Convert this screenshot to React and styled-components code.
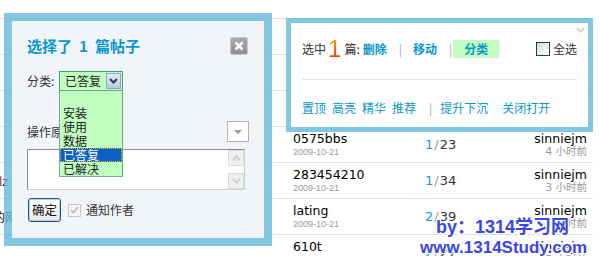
import React from "react";
import styled, { createGlobalStyle } from "styled-components";

const CJK = `"Noto Sans CJK SC", "Noto Sans", sans-serif`;
const LATIN = `"DejaVu Sans", "Noto Sans CJK SC", sans-serif`;

const GlobalStyle = createGlobalStyle`
  html, body { margin: 0; padding: 0; background: #fff; }
  body { font-family: ${CJK}; font-size: 12px; color: #333; }
  * { box-sizing: border-box; }
`;

const Page = styled.div`
  position: relative;
  width: 600px;
  height: 256px;
  overflow: hidden;
  background: #fff;
`;

/* ---------- background topic table ---------- */
const Table = styled.div`
  width: 593px;
`;

const Row = styled.div`
  display: grid;
  grid-template-columns: 17px 276px 132px 90px 1fr;
  height: ${(p) => p.$h ?? 36}px;
  border-bottom: 1px solid #e2e2e2;
`;

const Fragment = styled.div`
  grid-column: 1;
  display: flex;
  align-items: center;
  justify-content: flex-end;
  overflow: hidden;
  white-space: nowrap;
  padding-right: ${(p) => p.$pr ?? 0}px;
  font-size: 12px;
  line-height: 14px;
  color: #111;
`;

const Accent = styled.span`
  color: #8a1f4a;
`;

const Subject = styled.div`
  grid-column: 3;
  padding-top: 5px;
`;

const Topic = styled.div`
  font-family: ${LATIN};
  font-size: 12.5px;
  line-height: 14px;
  color: #000;
`;

const DateLine = styled.div`
  font-family: "Liberation Sans", sans-serif;
  font-size: 9px;
  line-height: 12px;
  color: #999;
`;

const Stats = styled.div`
  grid-column: 4;
  display: flex;
  align-items: center;
  font-family: ${LATIN};
  font-size: 13px;
  color: #333;
`;

const Replies = styled.span`
  color: #1a9ad6;
`;

const Slash = styled.span`
  color: #999;
  margin: 0 1px;
`;

const Author = styled.div`
  grid-column: 5;
  padding-top: 5px;
  padding-right: 6px;
  text-align: right;
`;

const AuthorName = styled.div`
  font-family: ${LATIN};
  font-size: 12.5px;
  line-height: 14px;
  color: #000;
`;

const Ago = styled.div`
  font-family: ${LATIN};
  font-size: 10.5px;
  line-height: 11px;
  color: #9a9a9a;
`;

/* ---------- moderation dialog (left) ---------- */
const Dialog = styled.div`
  position: absolute;
  left: 4px;
  top: 13px;
  width: 268px;
  height: 233px;
  border: 8px solid rgba(100, 185, 220, 0.8);
  background: #f1f5fa;
  background-clip: padding-box;
  padding: 16px 15px 0 15px;
  z-index: 2;
`;

const Header = styled.div`
  display: flex;
  align-items: center;
  justify-content: space-between;
  height: 18px;
`;

const Title = styled.div`
  font-family: ${CJK};
  font-size: 15px;
  font-weight: 700;
  line-height: 18px;
  color: #0b97d0;
`;

const TitleCount = styled.span`
  margin: 0 7px;
`;

const CloseBtn = styled.div`
  width: 18px;
  height: 18px;
  margin-right: 1px;
  border-radius: 2px;
  background: linear-gradient(#a9a9a9, #8f8f8f);
  border: 1px solid #c9c9c9;
  display: flex;
  align-items: center;
  justify-content: center;
`;

const FieldRow = styled.div`
  display: flex;
  align-items: center;
  height: ${(p) => p.$h}px;
  margin-top: ${(p) => p.$mt}px;
`;

const Label = styled.span`
  display: inline-block;
  width: ${(p) => (p.$w ? `${p.$w}px` : "auto")};
  font-size: 12px;
  line-height: 20px;
  color: #333;
  white-space: nowrap;
`;

const Select = styled.div`
  position: relative;
  width: 64px;
  height: 20px;
  border: 1px solid #3ea672;
  background: #c0ffc0;
  display: flex;
  align-items: center;
  padding: 0 1px 0 5px;
  font-size: 12px;
  line-height: 16px;
  color: #222;
`;

const SelectArrow = styled.div`
  margin-left: auto;
  width: 15px;
  height: 16px;
  border: 1px solid #8ea5c0;
  background: linear-gradient(#e1eaf6, #b8cbe4);
  display: flex;
  align-items: center;
  justify-content: center;
`;

const DropList = styled.div`
  position: absolute;
  top: 18px;
  left: -1px;
  width: 64px;
  border: 1px solid #5cb07f;
  border-bottom-color: #7f9db9;
  border-left-color: #7f9db9;
  background: #c0ffc0;
  padding-top: 1px;
  z-index: 5;
`;

const DropItem = styled.div`
  height: 14px;
  line-height: 14px;
  padding-left: 3px;
  font-size: 12px;
  color: ${(p) => (p.$selected ? "#fff" : "#222")};
  background: ${(p) => (p.$selected ? "#0b61c5" : "transparent")};
  outline: ${(p) => (p.$selected ? "1px dotted #e8b000" : "none")};
  outline-offset: -1px;
`;

const SmallSelect = styled.div`
  margin-left: auto;
  width: 22px;
  height: 21px;
  border: 1px solid #b4b4b4;
  background: #fff;
  display: flex;
  align-items: center;
  justify-content: center;
`;

const TextBox = styled.div`
  margin-top: 7px;
  width: 218px;
  height: 41px;
  background: #fff;
  border: 1px solid #cfcfcf;
  border-top-color: #8c8c8c;
  border-left-color: #8c8c8c;
  display: flex;
  justify-content: flex-end;
`;

const ScrollCol = styled.div`
  width: 16px;
  display: flex;
  flex-direction: column;
  justify-content: space-between;
`;

const ScrollBtn = styled.div`
  height: 16px;
  background: #efefec;
  border: 1px solid #dcdcdc;
  display: flex;
  align-items: center;
  justify-content: center;
`;

const ActionRow = styled.div`
  display: flex;
  align-items: center;
  height: 24px;
  margin-top: 8px;
`;

const OkButton = styled.div`
  margin-left: 1px;
  width: 33px;
  height: 24px;
  border: 1px solid #1f4f8f;
  border-radius: 3px;
  background: linear-gradient(#ffffff, #ece9e0);
  box-shadow: inset 0 0 0 1px #b8d0f0;
  display: flex;
  align-items: center;
  justify-content: center;
  font-size: 12.5px;
  line-height: 16px;
  color: #111;
`;

const CheckBox = styled.div`
  margin-left: ${(p) => p.$ml}px;
  width: ${(p) => p.$size}px;
  height: ${(p) => p.$size}px;
  border: 1px solid ${(p) => (p.$disabled ? "#c8c8c8" : "#1d3c66")};
  background: ${(p) => (p.$disabled ? "#f4f4f4" : "linear-gradient(135deg, #dcdcd6, #ffffff)")};
  display: flex;
  align-items: center;
  justify-content: center;
`;

const CheckLabel = styled.span`
  margin-left: ${(p) => p.$ml}px;
  font-size: 12px;
  line-height: 16px;
  color: #333;
`;

/* ---------- action panel (right) ---------- */
const Panel = styled.div`
  position: absolute;
  left: 286px;
  top: 18px;
  width: 307px;
  height: 114px;
  border: 5px solid rgba(100, 185, 220, 0.8);
  background: #fff;
  background-clip: padding-box;
  padding: 16px 11px 0 11px;
  z-index: 2;
`;

const Collapse = styled.div`
  position: absolute;
  top: 4px;
  right: 3px;
  width: 9px;
  height: 6px;
  display: flex;
`;

const PanelRow = styled.div`
  display: flex;
  align-items: center;
  height: 20px;
  margin-top: ${(p) => p.$mt ?? 0}px;
  font-size: 12px;
  line-height: 20px;
  color: #333;
  white-space: nowrap;
`;

const BigNum = styled.span`
  font-family: "Liberation Sans", sans-serif;
  font-size: 24px;
  line-height: 20px;
  margin: 0 3px 0 2px;
  background: linear-gradient(#ff9b00, #e8380d);
  -webkit-background-clip: text;
  background-clip: text;
  color: transparent;
`;

const Action = styled.span`
  font-weight: ${(p) => (p.$bold ? 700 : 400)};
  color: #0a96cc;
  margin-left: ${(p) => p.$ml ?? 0}px;
`;

const ActiveAction = styled.span`
  height: 18px;
  line-height: 18px;
  padding: 0 11px;
  background: #c0ffc0;
  font-weight: 700;
  color: #0a96cc;
`;

const Sep = styled.span`
  color: #c49ac4;
  margin-left: ${(p) => p.$l}px;
  margin-right: ${(p) => p.$r}px;
`;

const SelectAll = styled.div`
  margin-left: auto;
  display: flex;
  align-items: center;
`;

const Divider = styled.div`
  margin-top: 20px;
  height: 1px;
  background: #e4e4e4;
`;

/* ---------- watermark ---------- */
const Watermark = styled.div`
  position: absolute;
  left: 420px;
  top: 216px;
  z-index: 4;
  font-family: "Liberation Sans", ${CJK};
  font-weight: 700;
  color: #3a46e6;
  white-space: nowrap;
  text-shadow: 1px 0 0 #fff, -1px 0 0 #fff, 0 1px 0 #fff, 0 -1px 0 #fff,
    1px 1px 0 #fff, -1px -1px 0 #fff, 1px -1px 0 #fff, -1px 1px 0 #fff;
`;

const WmLine = styled.div`
  font-size: ${(p) => p.$size}px;
  line-height: ${(p) => p.$lh}px;
  padding-left: ${(p) => p.$pl ?? 0}px;
`;

/* ---------- icons ---------- */
const Chevron = ({ dir = "down", color }) => (
  <svg width="9" height="6" viewBox="0 0 9 6">
    <polyline
      points={dir === "down" ? "1,1 4.5,4.5 8,1" : "1,5 4.5,1.5 8,5"}
      fill="none"
      stroke={color}
      strokeWidth="2"
    />
  </svg>
);

const CloseIcon = () => (
  <svg width="10" height="10" viewBox="0 0 10 10">
    <path d="M1.5 1.5 L8.5 8.5 M8.5 1.5 L1.5 8.5" stroke="#fff" strokeWidth="2.6" />
  </svg>
);

const TriangleDown = () => (
  <svg width="8" height="4" viewBox="0 0 8 4">
    <polygon points="0,0 8,0 4,4" fill="#9c9c9c" />
  </svg>
);

const Tick = ({ color }) => (
  <svg width="9" height="8" viewBox="0 0 9 8">
    <polyline points="1,4 3.5,6.5 8,1" fill="none" stroke={color} strokeWidth="1.8" />
  </svg>
);

const rows = [
  { frag: null },
  { frag: null },
  { frag: null },
  {
    frag: null,
    topic: "0575bbs",
    date: "2009-10-21",
    replies: "1",
    views: "23",
    author: "sinniejm",
    ago: "4 小时前",
  },
  {
    frag: (
      <>
        <Accent>l</Accent>z
      </>
    ),
    pr: 9,
    topic: "283454210",
    date: "2009-10-21",
    replies: "1",
    views: "34",
    author: "sinniejm",
    ago: "3 小时前",
  },
  {
    frag: "的网",
    topic: "lating",
    date: "2009-10-21",
    replies: "2",
    views: "39",
    author: "sinniejm",
    ago: "5 小时前",
  },
  {
    frag: null,
    topic: "610t",
    date: "2009-10-21",
    replies: "2",
    views: "27",
    author: "sinniejm",
    ago: "5 小时前",
  },
];

const categories = ["", "安装", "使用", "数据", "已答复", "已解决"];

export default function App() {
  return (
    <Page>
      <GlobalStyle />
      <Table>
        <Row $h={19} />
        {rows.map((r, i) => (
          <Row key={i}>
            <Fragment $pr={r.pr}>{r.frag}</Fragment>
            <Subject>
              {r.topic && (
                <>
                  <Topic>{r.topic}</Topic>
                  <DateLine>{r.date}</DateLine>
                </>
              )}
            </Subject>
            <Stats>
              {r.replies && (
                <>
                  <Replies>{r.replies}</Replies>
                  <Slash>/</Slash>
                  {r.views}
                </>
              )}
            </Stats>
            <Author>
              {r.author && (
                <>
                  <AuthorName>{r.author}</AuthorName>
                  <Ago>{r.ago}</Ago>
                </>
              )}
            </Author>
          </Row>
        ))}
      </Table>

      <Dialog>
        <Header>
          <Title>
            选择了<TitleCount>1</TitleCount>篇帖子
          </Title>
          <CloseBtn>
            <CloseIcon />
          </CloseBtn>
        </Header>

        <FieldRow $h={20} $mt={16}>
          <Label $w={32}>分类:</Label>
          <Select>
            已答复
            <SelectArrow>
              <Chevron color="#2c3f5f" />
            </SelectArrow>
            <DropList>
              {categories.map((c, i) => (
                <DropItem key={i} $selected={c === "已答复"}>
                  {c}
                </DropItem>
              ))}
            </DropList>
          </Select>
        </FieldRow>

        <FieldRow $h={21} $mt={30}>
          <Label>操作原因:</Label>
          <SmallSelect>
            <TriangleDown />
          </SmallSelect>
        </FieldRow>

        <TextBox>
          <ScrollCol>
            <ScrollBtn>
              <Chevron dir="up" color="#cfcfcf" />
            </ScrollBtn>
            <ScrollBtn>
              <Chevron color="#cfcfcf" />
            </ScrollBtn>
          </ScrollCol>
        </TextBox>

        <ActionRow>
          <OkButton>确定</OkButton>
          <CheckBox $ml={7} $size={13} $disabled>
            <Tick color="#bdbdbd" />
          </CheckBox>
          <CheckLabel $ml={5}>通知作者</CheckLabel>
        </ActionRow>
      </Dialog>

      <Panel>
        <Collapse>
          <Chevron color="#d6d6d6" />
        </Collapse>
        <PanelRow>
          选中<BigNum>1</BigNum>篇:
          <Action $bold $ml={3}>删除</Action>
          <Sep $l={12} $r={11}>|</Sep>
          <Action $bold>移动</Action>
          <Sep $l={12} $r={1}>|</Sep>
          <ActiveAction>分类</ActiveAction>
          <SelectAll>
            <CheckBox $ml={0} $size={14} />
            <CheckLabel $ml={3}>全选</CheckLabel>
          </SelectAll>
        </PanelRow>
        <Divider />
        <PanelRow $mt={18}>
          <Action>置顶</Action>
          <Action $ml={6}>高亮</Action>
          <Action $ml={6}>精华</Action>
          <Action $ml={6}>推荐</Action>
          <Sep $l={13} $r={8}>|</Sep>
          <Action>提升下沉</Action>
          <Action $ml={14}>关闭打开</Action>
        </PanelRow>
      </Panel>

      <Watermark>
        <WmLine $size={18} $lh={22} $pl={16}>
          by：1314学习网
        </WmLine>
        <WmLine $size={17} $lh={20}>
          www.1314Study.com
        </WmLine>
      </Watermark>
    </Page>
  );
}
